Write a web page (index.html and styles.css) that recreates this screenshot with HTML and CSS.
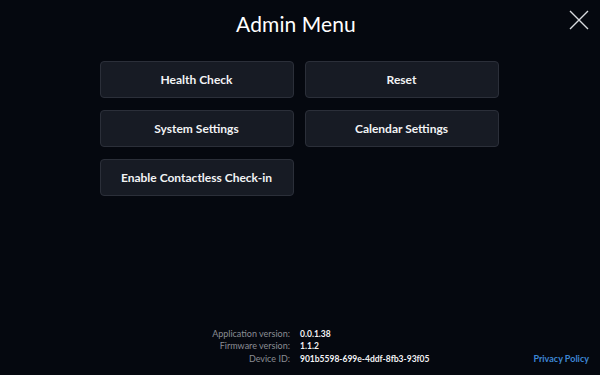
FILE: index.html
```html
<!DOCTYPE html>
<html lang="en">
<head>
    <meta charset="UTF-8">
    <title>Admin Menu</title>
    <link rel="stylesheet" href="styles.css">
</head>
<body>
    <div class="screen">
        <div class="header">
            <div class="title">Admin Menu</div>
            <button class="close" aria-label="Close">
                <svg width="20" height="20" viewBox="0 0 20 20">
                    <path d="M1 1 L19 19 M19 1 L1 19" stroke="#d8dadf" stroke-width="1.4" fill="none"/>
                </svg>
            </button>
        </div>

        <div class="menu">
            <button class="menu-button">Health Check</button>
            <button class="menu-button">Reset</button>
            <button class="menu-button">System Settings</button>
            <button class="menu-button">Calendar Settings</button>
            <button class="menu-button">Enable Contactless Check-in</button>
        </div>

        <div class="footer">
            <div class="info">
                <span class="label">Application version:</span><span class="value">0.0.1.38</span>
                <span class="label">Firmware version:</span><span class="value">1.1.2</span>
                <span class="label">Device ID:</span><span class="value">901b5598-699e-4ddf-8fb3-93f05</span>
            </div>
            <a href="#" class="privacy">Privacy Policy</a>
        </div>
    </div>
</body>
</html>
```

FILE: styles.css
```css
* {
    margin: 0;
    padding: 0;
    box-sizing: border-box;
}

body, html {
    width: 100%;
    height: 100%;
    background: #05080f;
    font-family: 'Lato', 'Noto Sans', sans-serif;
    color: #ffffff;
}

.screen {
    height: 100%;
    display: flex;
    flex-direction: column;
}

.header {
    position: relative;
    height: 47px;
    display: flex;
    justify-content: center;
    align-items: center;
}

.title {
    font-size: 21px;
    font-weight: 400;
    letter-spacing: 0.1px;
    margin-left: -8px;
}

.close {
    position: absolute;
    top: 10px;
    right: 11px;
    width: 20px;
    height: 20px;
    background: none;
    border: none;
    cursor: pointer;
}

.menu {
    display: grid;
    grid-template-columns: 194px 194px;
    grid-auto-rows: 37px;
    column-gap: 11px;
    row-gap: 12px;
    justify-content: center;
    margin-top: 14px;
    margin-left: -2px;
}

.menu-button {
    background: #171b24;
    border: 1px solid #2b2f39;
    border-radius: 4px;
    color: #f2f3f5;
    font-family: 'Lato', 'Noto Sans', sans-serif;
    font-size: 12px;
    font-weight: 700;
    cursor: pointer;
}

.footer {
    margin-top: auto;
    display: flex;
    align-items: flex-end;
    justify-content: space-between;
    padding: 0 11px 11px 212px;
}

.info {
    display: grid;
    grid-template-columns: 78px auto;
    column-gap: 10px;
    row-gap: 2px;
    font-size: 9px;
    line-height: 10.5px;
}

.label {
    color: #8a8d94;
    text-align: right;
}

.value {
    color: #f2f3f5;
    font-weight: 700;
    font-size: 8.5px;
}

.privacy {
    color: #3d86d4;
    font-size: 9px;
    font-weight: 700;
    text-decoration: none;
    line-height: 10.5px;
}
```
